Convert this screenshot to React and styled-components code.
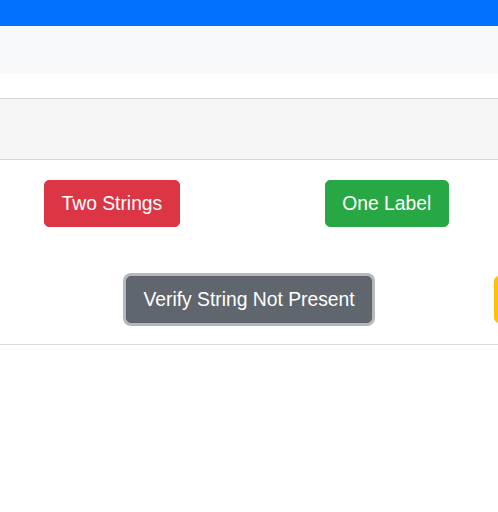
import React from "react";
import styled, { createGlobalStyle } from "styled-components";

const Global = createGlobalStyle`
  html, body { margin: 0; padding: 0; background: #fff; overflow: hidden; }
  body { font-family: "Liberation Sans", Arial, sans-serif; }
`;

const Page = styled.div`
  width: 498px;
  overflow: hidden;
`;

const TopBar = styled.div`
  height: 26px;
  background: #0070ff;
`;

const SubBar = styled.div`
  height: 48px;
  background: #f8f9fa;
`;

const Spacer = styled.div`
  height: 24px;
`;

const Panel = styled.div`
  height: 60px;
  background: #f5f5f5;
  border-top: 1px solid #d6d6d6;
  border-bottom: 1px solid #d6d6d6;
`;

const ButtonRow = styled.div`
  display: flex;
  align-items: center;
  padding: ${(p) => p.$pad};
  gap: ${(p) => p.$gap}px;
  border-bottom: ${(p) => (p.$divider ? "1px solid #dcdcdc" : "none")};
  white-space: nowrap;
`;

const colors = {
  danger: { bg: "#dc3545", border: "#dc3545", fg: "#fff" },
  success: { bg: "#28a745", border: "#28a745", fg: "#fff" },
  secondary: { bg: "#5f666e", border: "#59606a", fg: "#fff" },
  warning: { bg: "#ffc107", border: "#ffc107", fg: "#212529" },
};

const Button = styled.button`
  flex: none;
  height: 47px;
  padding: 0 16.5px;
  border-radius: 5px;
  border: 1px solid ${(p) => colors[p.$variant].border};
  background: ${(p) => colors[p.$variant].bg};
  color: ${(p) => colors[p.$variant].fg};
  font-family: "Liberation Sans", Arial, sans-serif;
  font-size: 19.3px;
  line-height: 46px;
  box-shadow: ${(p) => (p.$focus ? "0 0 0 3px rgba(160,166,172,0.8)" : "none")};
`;

export default function App() {
  return (
    <Page>
      <Global />
      <TopBar />
      <SubBar />
      <Spacer />
      <Panel />
      <ButtonRow $pad="20px 0 0 44px" $gap={145}>
        <Button $variant="danger">Two Strings</Button>
        <Button $variant="success">One Label</Button>
      </ButtonRow>
      <ButtonRow $pad="49px 0 21px 126px" $gap={122}>
        <Button $variant="secondary" $focus>Verify String Not Present</Button>
        <Button $variant="warning">Warning</Button>
      </ButtonRow>
      <ButtonRow $pad="0" $gap={0} $divider />
    </Page>
  );
}
